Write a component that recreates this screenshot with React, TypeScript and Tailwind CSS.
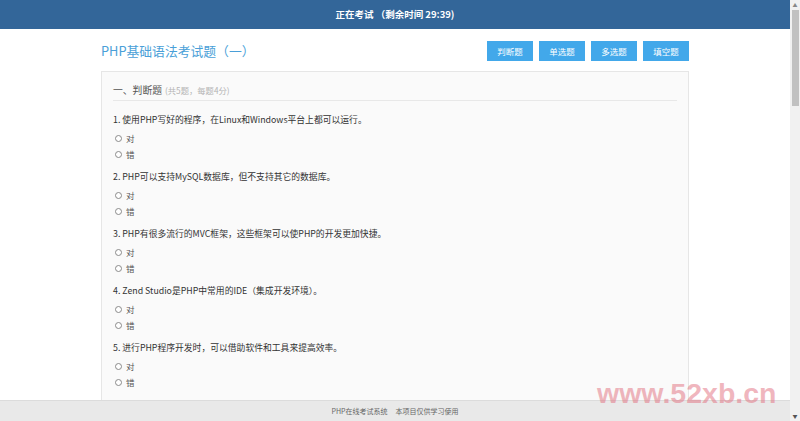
const questions = [
  '1. 使用PHP写好的程序，在Linux和Windows平台上都可以运行。',
  '2. PHP可以支持MySQL数据库，但不支持其它的数据库。',
  '3. PHP有很多流行的MVC框架，这些框架可以使PHP的开发更加快捷。',
  '4. Zend Studio是PHP中常用的IDE（集成开发环境）。',
  '5. 进行PHP程序开发时，可以借助软件和工具来提高效率。',
];

const tabs = ['判断题', '单选题', '多选题', '填空题'];

const font = "font-['Noto_Sans_CJK_SC','Noto_Sans',sans-serif]";

const Radio = ({ label }: { label: string }) => (
  <label className="flex h-[16px] items-center gap-[4px] pl-[2px] text-[8.5px] text-[#555]">
    <span className="h-[7px] w-[7px] rounded-full border border-[#8a8a8a] bg-white" />
    {label}
  </label>
);

const App = () => {
  return (
    <div className={`relative flex h-[421px] w-[800px] overflow-hidden bg-white ${font}`}>
      <div className="flex w-[790px] flex-col">
        {/* Header */}
        <header className="flex h-[29px] shrink-0 items-center justify-center bg-[#336699] text-[9.5px] font-bold text-white">
          正在考试 （剩余时间 29:39)
        </header>

        {/* Content */}
        <main className="flex-1 overflow-hidden">
          <div className="mx-auto w-[588px] pt-[12px]">
            <div className="flex h-[20px] items-center justify-between">
              <h1 className="text-[12.8px] text-[#4a9fd8]">PHP基础语法考试题（一）</h1>
              <div className="flex gap-[6px]">
                {tabs.map((tab) => (
                  <button
                    key={tab}
                    className="h-[20px] w-[46px] bg-[#42a8ea] text-[8.5px] text-white"
                  >
                    {tab}
                  </button>
                ))}
              </div>
            </div>

            <section className="mt-[10px] border border-[#e6e6e6] bg-[#fafafa] px-[11px] pb-[60px] pt-[8px]">
              <div className="flex h-[21px] items-center border-b border-[#e8e8e8]">
                <span className="text-[9.8px] text-[#555]">一、判断题</span>
                <span className="ml-[3px] text-[8.3px] text-[#b4b4b4]">(共5题，每题4分)</span>
              </div>
              <div className="pt-[10px]">
                {questions.map((q) => (
                  <div key={q} className="mb-[6px]">
                    <p className="h-[18px] text-[8.8px] leading-[18px] text-[#333]">{q}</p>
                    <div className="mt-[1px]">
                      <Radio label="对" />
                      <Radio label="错" />
                    </div>
                  </div>
                ))}
              </div>
            </section>
          </div>
        </main>

        {/* Footer */}
        <footer className="flex h-[21px] shrink-0 items-center justify-center gap-[8px] border-t border-[#dcdcdc] bg-[#e9e9e9] text-[7px] text-[#666]">
          <span>PHP在线考试系统</span>
          <span>本项目仅供学习使用</span>
        </footer>
      </div>

      {/* Scrollbar */}
      <div className="flex w-[10px] flex-col items-center bg-[#f1f1f1]">
        <div className="flex h-[10px] items-center text-[5px] text-[#888]">▲</div>
        <div className="h-[96px] w-[7px] bg-[#c1c1c1]" />
        <div className="flex-1" />
        <div className="flex h-[10px] items-center text-[5px] text-[#555]">▼</div>
      </div>

      {/* Watermark */}
      <div className="pointer-events-none absolute left-[597px] top-[379px] font-['Liberation_Sans',sans-serif] text-[28.5px] font-bold leading-none text-[rgba(225,110,125,0.5)]">
        www.52xb.cn
      </div>
    </div>
  );
};

export default App;
